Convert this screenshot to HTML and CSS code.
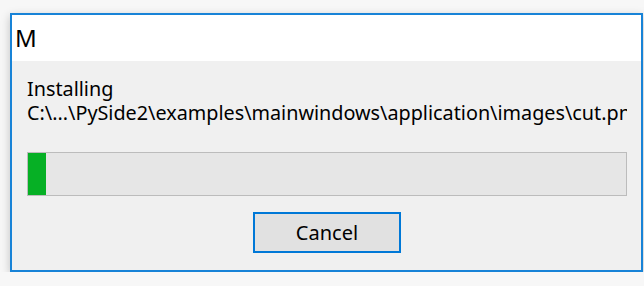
FILE: index.html
```html
<!DOCTYPE html>
<html lang="en">
<head>
    <meta charset="UTF-8">
    <meta name="viewport" content="width=device-width, initial-scale=1.0">
    <title>Installing</title>
    <link rel="stylesheet" href="styles.css">
</head>
<body>
    <div class="window">
        <!-- Title bar -->
        <div class="title-bar">M</div>
        <div class="content">
            <div class="label">Installing</div>
            <div class="label path">C:\...\PySide2\examples\mainwindows\application\images\cut.png</div>
            <div class="progress">
                <div class="progress-chunk" style="width: 3%"></div>
            </div>
            <div class="buttons">
                <button class="cancel">Cancel</button>
            </div>
        </div>
    </div>
</body>
</html>
```
FILE: styles.css
```css
/* General styling */
body {
    font-family: "Noto Sans", "Open Sans", sans-serif;
    background-color: #f7f7f7;
    color: #000;
    margin: 0;
    padding: 13px 1px 0 10px;
}
.window {
    width: 629px;
    height: 255px;
    border: 2px solid #1883d7;
    background-color: #f0f0f0;
    box-shadow: 0 3px 9px rgba(0, 0, 0, 0.22);
    display: flex;
    flex-direction: column;
}
.title-bar {
    height: 46px;
    background-color: #fff;
    font-size: 24px;
    line-height: 46px;
    padding-left: 3px;
}
.content {
    flex: 1;
    padding: 16px 14px 17px 15px;
    display: flex;
    flex-direction: column;
}
.label {
    font-size: 19.8px;
    line-height: 24px;
    white-space: nowrap;
    overflow: hidden;
}
.progress {
    margin-top: 27px;
    height: 42px;
    border: 1px solid #bcbcbc;
    background-color: #e6e6e6;
}
.progress-chunk {
    height: 100%;
    background-color: #06b025;
}
.buttons {
    margin-top: auto;
    display: flex;
    justify-content: center;
}
.cancel {
    width: 148px;
    height: 41px;
    font-family: inherit;
    font-size: 20px;
    color: #000;
    background-color: #e1e1e1;
    border: 2px solid #0078d7;
    padding: 0;
}
```
